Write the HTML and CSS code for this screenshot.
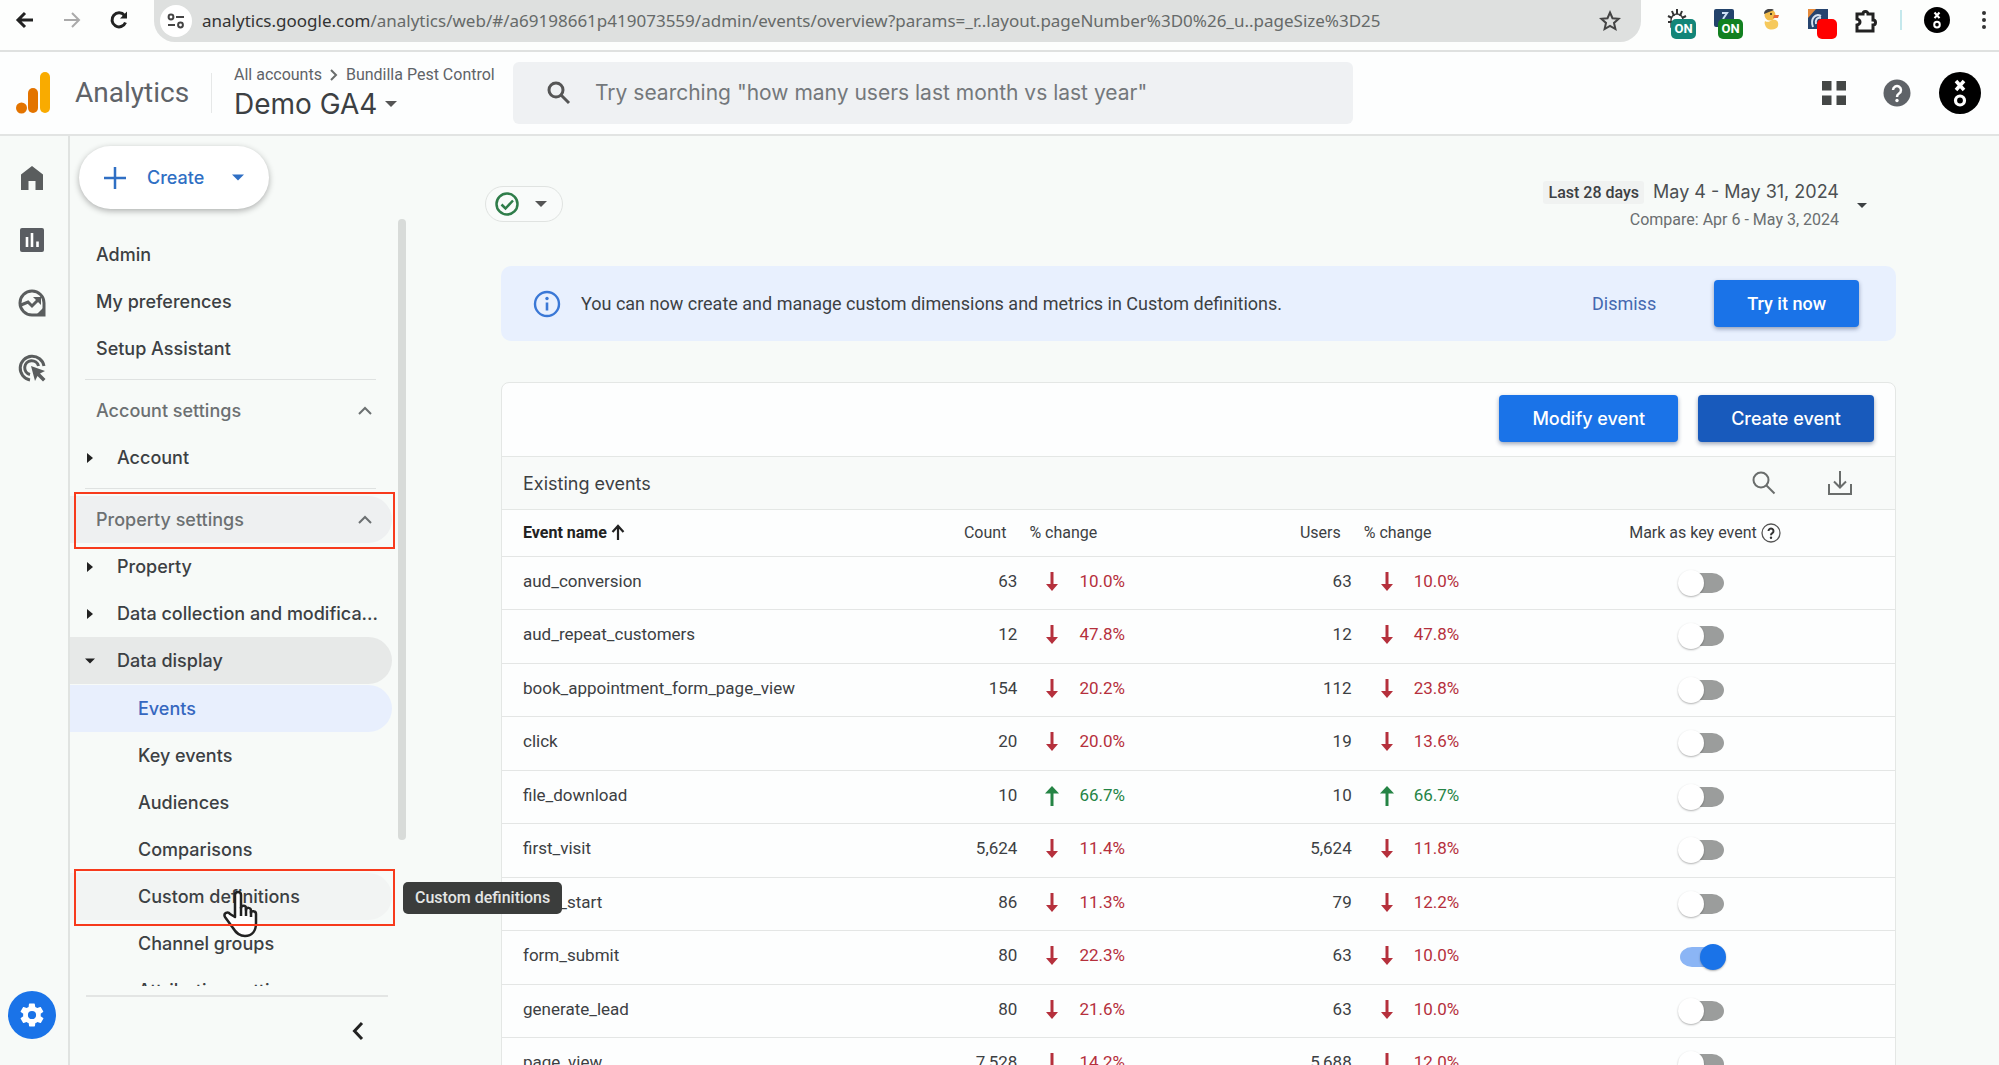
FILE: index.html
```html
<!DOCTYPE html>
<html lang="en">
<head>
<meta charset="utf-8">
<title>Analytics | Events</title>
<link rel="stylesheet" href="styles.css">
</head>
<body>
<svg class="defs" aria-hidden="true">
  <symbol id="i-down" viewBox="0 0 14 24"><path d="M7 3v16" stroke="currentColor" stroke-width="3" fill="none"/><path d="M1 15h12l-6 7z" fill="currentColor"/></symbol>
  <symbol id="i-up" viewBox="0 0 14 24"><path d="M7 7v16" stroke="currentColor" stroke-width="3" fill="none"/><path d="M0 10.500h14L7 3z" fill="currentColor"/></symbol>
  <symbol id="i-caret" viewBox="0 0 12 6"><path d="M0 0h12L6 6z" fill="currentColor"/></symbol>
  <symbol id="i-right" viewBox="0 0 6 10"><path d="M0 0l6 5-6 5z" fill="currentColor"/></symbol>
  <symbol id="i-fold" viewBox="0 0 14 9"><path d="M1 8l6-6 6 6" fill="none" stroke="currentColor" stroke-width="2"/></symbol>
  <symbol id="i-xo" viewBox="0 0 42 42"><circle cx="21" cy="21" r="21" fill="#000"/><path d="M17 9l8 9M25 9l-8 9" stroke="#fff" stroke-width="3.500"/><circle cx="21" cy="28.500" r="4.500" fill="none" stroke="#fff" stroke-width="3.200"/></symbol>
</svg>

<div class="browser">
  <button class="plain" aria-label="Back"><svg width="20" height="20" viewBox="0 0 20 20"><path d="M18 10H4M10 3l-7 7 7 7" class="ln dark"/></svg></button>
  <button class="plain" aria-label="Forward"><svg width="20" height="20" viewBox="0 0 20 20"><path d="M2 10h14M10 3l7 7-7 7" class="ln pale"/></svg></button>
  <button class="plain" aria-label="Reload"><svg width="20" height="20" viewBox="0 0 20 20"><path d="M16.500 12.500A7 7 0 1 1 15.500 5.500" class="ln dark"/><path d="M18 1.500v7h-7z" fill="#222"/></svg></button>
  <div class="omnibox">
    <span class="site"><svg width="18" height="18" viewBox="0 0 18 18"><circle cx="4" cy="5" r="2.400" class="ln ink"/><path d="M9 5h8M1 13h7" class="ln ink"/><circle cx="13.500" cy="13" r="2.400" class="ln ink"/></svg></span>
    <span class="url"><b>analytics.google.com</b>/analytics/web/#/a69198661p419073559/admin/events/overview?params=_r..layout.pageNumber%3D0%26_u..pageSize%3D25</span>
    <svg width="22" height="22" viewBox="0 0 22 22"><path d="M11 2.500l2.500 5.700 6.200.6-4.700 4.100 1.400 6.100L11 15.800 5.600 19 7 12.900 2.300 8.800l6.200-.6z" class="ln ink"/></svg>
  </div>
  <div class="exts">
    <div class="ext"><svg width="20" height="20" viewBox="0 0 20 20"><path d="M4 11a6 6 0 0 1 12 0v7H4z" fill="#fff" stroke="#444" stroke-width="1.500"/><path d="M1 7l4 2M5 2l2 5M10 0v5M15 2l-2 5M19 7l-4 2M1 13h4" stroke="#333" stroke-width="2"/></svg><span class="badge teal">ON</span></div>
    <div class="ext"><svg width="20" height="20" viewBox="0 0 20 20"><rect width="20" height="18" rx="2" fill="#23436b"/><path d="M8 4h5l-4 6" stroke="#cfe0f5" stroke-width="2" fill="none"/></svg><span class="badge green">ON</span></div>
    <div class="ext"><svg width="20" height="22" viewBox="0 0 20 22"><circle cx="9" cy="6" r="5.500" fill="#f2bd4b"/><path d="M3 5a6 5 0 0 1 10-4z" fill="#444"/><path d="M13 6h5l-1 3h-5z" fill="#e8693a"/><path d="M4 12c3 2 5 0 7-1 5-1 7 2 6 6-1 4-9 5-12 1-1-2-2-4-1-6z" fill="#f6c95c"/><circle cx="10" cy="5" r="1" fill="#222"/></svg></div>
    <div class="ext"><svg width="20" height="20" viewBox="0 0 20 20"><rect width="20" height="20" fill="#27456f"/><path d="M0 0h8L0 9z" fill="#e58a3c"/><path d="M5 18c-3-8 2-14 8-11M8 15c-1-4 1-7 5-6" stroke="#d8e4f2" stroke-width="2" fill="none"/></svg><span class="badge red"></span></div>
    <div class="ext"><svg width="22" height="24" viewBox="0 0 22 24"><path d="M2 5h6a2.500 2.500 0 1 1 5 0h5v6a2.500 2.500 0 1 1 0 5v6H2v-6c4-1 4-5 0-6z" class="ln dark"/></svg></div>
  </div>
  <span class="split"></span>
  <svg class="me" width="26" height="26"><use href="#i-xo"/></svg>
  <svg width="6" height="20" viewBox="0 0 6 20" fill="#333"><circle cx="3" cy="3" r="2"/><circle cx="3" cy="10" r="2"/><circle cx="3" cy="17" r="2"/></svg>
</div>

<header class="top">
  <svg class="logo" width="34" height="42" viewBox="0 0 34 42"><circle cx="5.500" cy="36" r="5.500" fill="#e37400"/><rect x="12" y="16" width="10" height="25" rx="5" fill="#e37400"/><rect x="24" y="0" width="10" height="41" rx="5" fill="#f9ab00"/></svg>
  <span class="brand">Analytics</span>
  <div class="property">
    <div class="crumbs"><a href="#">All accounts</a><svg width="8" height="12" viewBox="0 0 8 12"><path d="M1 1l5 5-5 5" class="ln grey"/></svg><a href="#">Bundilla Pest Control</a></div>
    <button class="plain picker">Demo GA4<svg width="12" height="6"><use href="#i-caret"/></svg></button>
  </div>
  <label class="search"><svg width="24" height="24" viewBox="0 0 24 24"><circle cx="9" cy="9" r="7" fill="none" stroke="#555" stroke-width="3"/><path d="M14 14l8 8" stroke="#555" stroke-width="3"/></svg>
    <input type="text" aria-label="Search" placeholder='Try searching "how many users last month vs last year"'></label>
  <div class="tools">
    <button class="plain" aria-label="Apps"><svg width="24" height="24" viewBox="0 0 24 24" fill="#444746"><path d="M0 0h9.500v9.500H0zM14.500 0H24v9.500h-9.500zM0 14.500h9.500V24H0zM14.500 14.500H24V24h-9.500z"/></svg></button>
    <button class="plain" aria-label="Help"><svg width="28" height="28" viewBox="0 0 28 28"><circle cx="14" cy="14" r="13.500" fill="#5f6368"/><path d="M10 11a4 4 0 1 1 6 3.500c-1.500 1-2 1.500-2 3.500" fill="none" stroke="#fff" stroke-width="2.500"/><circle cx="14" cy="21.500" r="1.700" fill="#fff"/></svg></button>
    <button class="plain" aria-label="Account"><svg width="42" height="42"><use href="#i-xo"/></svg></button>
  </div>
</header>

<div class="app">
  <nav class="rail" aria-label="Sections">
    <a href="#" aria-label="Home"><svg width="24" height="26" viewBox="0 0 24 26"><path d="M1 9.500L12 1l11 8.500V25h-7.500v-9h-7v9H1z" fill="#5a5d5e"/></svg></a>
    <a href="#" aria-label="Reports"><svg width="24" height="24" viewBox="0 0 24 24"><rect width="24" height="24" rx="2" fill="#5a5d62"/><path d="M7 9v10M12 5v14M17.500 13.500v5.500" stroke="#fff" stroke-width="2.600"/></svg></a>
    <a href="#" aria-label="Explore"><svg width="28" height="28" viewBox="0 0 28 28"><path d="M14 2a12 12 0 1 0 0 24h12V14A12 12 0 0 0 14 2z" class="ln rl"/><path d="M3 16l7-3 4 4 7-7" class="ln rl"/><path d="M15 8h8v8z" fill="#5a5d5e"/><path d="M25 19v6h-6z" fill="#5a5d5e"/></svg></a>
    <a href="#" aria-label="Advertising"><svg width="28" height="28" viewBox="0 0 28 28"><path d="M12 26A12 12 0 1 1 26 12" class="ln rl"/><path d="M12 20.500A7 7 0 1 1 20.500 12" class="ln rl"/><path d="M13 12l14 5-5 2.500 5.500 5.500-2.500 2.500-5.500-5.500-2.500 5z" fill="#5a5d5e"/></svg></a>
    <a href="#" class="gear" aria-label="Admin"><svg width="28" height="28" viewBox="0 0 24 24"><path fill="#fff" d="M19.400 13c0-.3.100-.6.100-1s0-.7-.1-1l2.100-1.600c.2-.2.200-.4.100-.6l-2-3.500c-.1-.2-.4-.3-.6-.2l-2.500 1c-.5-.4-1.100-.7-1.700-1l-.4-2.600c0-.2-.2-.4-.5-.4h-4c-.2 0-.5.200-.5.400L9.100 5.100c-.6.300-1.200.6-1.700 1l-2.500-1c-.2-.1-.5 0-.6.200l-2 3.500c-.1.200-.1.500.1.600L4.500 11c0 .3-.1.600-.1 1s0 .7.100 1l-2.100 1.600c-.2.200-.2.400-.1.600l2 3.500c.1.200.4.300.6.200l2.500-1c.5.400 1.100.7 1.700 1l.4 2.600c0 .2.200.4.500.4h4c.2 0 .5-.2.500-.4l.4-2.600c.6-.3 1.200-.6 1.700-1l2.500 1c.2.100.5 0 .6-.2l2-3.500c.1-.2.100-.5-.1-.6zM12 15.500a3.500 3.500 0 1 1 0-7 3.500 3.500 0 0 1 0 7z"/></svg></a>
  </nav>

  <aside class="side">
    <button class="create"><svg width="22" height="22" viewBox="0 0 22 22"><path d="M11 0v22M0 11h22" stroke="currentColor" stroke-width="2.500"/></svg><span>Create</span><svg width="12" height="7"><use href="#i-caret"/></svg></button>
    <div class="scroller">
      <ul class="menu">
        <li><a href="#">Admin</a></li>
        <li><a href="#">My preferences</a></li>
        <li><a href="#">Setup Assistant</a></li>
        <li class="rule"></li>
        <li><button class="group">Account settings<svg width="14" height="9"><use href="#i-fold"/></svg></button></li>
        <li><a href="#" class="node"><svg class="tw" width="6" height="10"><use href="#i-right"/></svg>Account</a></li>
        <li class="rule"></li>
        <li class="marked"><button class="group hover">Property settings<svg width="14" height="9"><use href="#i-fold"/></svg></button></li>
        <li><a href="#" class="node"><svg class="tw" width="6" height="10"><use href="#i-right"/></svg>Property</a></li>
        <li><a href="#" class="node"><svg class="tw" width="6" height="10"><use href="#i-right"/></svg>Data collection and modifica...</a></li>
        <li><a href="#" class="node open"><svg class="tw" width="10" height="6"><use href="#i-caret"/></svg>Data display</a>
          <ul class="sub">
            <li><a href="#" class="current">Events</a></li>
            <li><a href="#">Key events</a></li>
            <li><a href="#">Audiences</a></li>
            <li><a href="#">Comparisons</a></li>
            <li class="marked"><a href="#" class="soft">Custom definitions</a>
              <svg class="hand" width="38" height="48" viewBox="0 0 38 48"><path d="M13 27V5c0-4 6-4 6 0v13c0-3 5-3 5 0v2c0-3 5-3 5 1v2c0-3 5-2 5 1v9c0 8-4 13-11 13-6 0-9-3-12-8L3 27c-2-4 3-6 5-3z" fill="#fff" stroke="#222" stroke-width="2.500" stroke-linejoin="round"/><path d="M19 17v9M24 18v8M29 21v6" stroke="#222" stroke-width="2.500"/></svg>
              <span class="tip" role="tooltip">Custom definitions</span></li>
            <li><a href="#">Channel groups</a></li>
            <li><a href="#">Attribution settings</a></li>
          </ul></li>
      </ul>
      <div class="thumb"></div>
    </div>
    <div class="foot"><button class="plain" aria-label="Collapse"><svg width="12" height="20" viewBox="0 0 12 20"><path d="M10 2l-7.500 8 7.500 8" fill="none" stroke="#222" stroke-width="3"/></svg></button></div>
  </aside>

  <main class="main">
    <div class="bar">
      <button class="chip" aria-label="Data quality"><svg width="24" height="24" viewBox="0 0 24 24"><circle cx="12" cy="12" r="10.500" fill="none" stroke="#2f7d4a" stroke-width="2.500"/><path d="M6.500 12.500l4 4 7.500-8" fill="none" stroke="#2f7d4a" stroke-width="2.500"/></svg><svg width="12" height="6"><use href="#i-caret"/></svg></button>
      <button class="plain dates"><span class="range"><span><span class="preset">Last 28 days</span><span class="when">May 4 - May 31, 2024</span></span><span class="compare">Compare: Apr 6 - May 3, 2024</span></span><svg width="10" height="5"><use href="#i-caret"/></svg></button>
    </div>

    <section class="banner">
      <svg width="28" height="28" viewBox="0 0 28 28"><circle cx="14" cy="14" r="12" fill="none" stroke="#3a78d6" stroke-width="2.400"/><path d="M14 12.500v8" stroke="#3a78d6" stroke-width="2.600"/><circle cx="14" cy="8.500" r="1.700" fill="#3a78d6"/></svg>
      <p>You can now create and manage custom dimensions and metrics in Custom definitions.</p>
      <button class="plain dismiss">Dismiss</button>
      <button class="btn">Try it now</button>
    </section>

    <section class="card">
      <div class="actions"><button class="btn wide">Modify event</button><button class="btn wide deep">Create event</button></div>
      <div class="caption"><h2>Existing events</h2>
        <button class="plain" aria-label="Search events"><svg width="24" height="24" viewBox="0 0 24 24"><circle cx="9" cy="9" r="7.500" class="ln grey"/><path d="M14.500 14.500l8 8" class="ln grey"/></svg></button>
        <button class="plain" aria-label="Download"><svg width="26" height="26" viewBox="0 0 26 26"><path d="M13 1v16M7 11.500l6 6 6-6M2 14v10h22V14" class="ln grey"/></svg></button></div>
      <table>
        <colgroup><col class="c-name"><col class="c-num"><col class="c-chg"><col class="c-num"><col class="c-chg2"><col class="c-key"></colgroup>
        <thead><tr><th class="name" scope="col">Event name <svg width="14" height="16" viewBox="0 0 14 16"><path d="M7 16V2M1.500 8L7 2l5.500 6" fill="none" stroke="#222" stroke-width="2.200"/></svg></th><th class="num" scope="col">Count</th><th class="chg" scope="col">% change</th><th class="num" scope="col">Users</th><th class="chg" scope="col">% change</th><th class="key" scope="col">Mark as key event <svg width="20" height="20" viewBox="0 0 20 20"><circle cx="10" cy="10" r="9" fill="none" stroke="#555" stroke-width="1.300"/><path d="M7.500 8a2.500 2.500 0 1 1 3.800 2.200c-1 .6-1.300 1-1.300 2" fill="none" stroke="#333" stroke-width="2"/><circle cx="10" cy="14.700" r="1.200" fill="#333"/></svg></th></tr></thead>
        <tbody>
          <tr><td class="name">aud_conversion</td><td class="num">63</td><td class="chg"><span class="dn"><svg><use href="#i-down"/></svg>10.0%</span></td><td class="num">63</td><td class="chg"><span class="dn"><svg><use href="#i-down"/></svg>10.0%</span></td><td class="key"><input type="checkbox" aria-label="aud_conversion key event"></td></tr>
          <tr><td class="name">aud_repeat_customers</td><td class="num">12</td><td class="chg"><span class="dn"><svg><use href="#i-down"/></svg>47.8%</span></td><td class="num">12</td><td class="chg"><span class="dn"><svg><use href="#i-down"/></svg>47.8%</span></td><td class="key"><input type="checkbox" aria-label="aud_repeat_customers key event"></td></tr>
          <tr><td class="name">book_appointment_form_page_view</td><td class="num">154</td><td class="chg"><span class="dn"><svg><use href="#i-down"/></svg>20.2%</span></td><td class="num">112</td><td class="chg"><span class="dn"><svg><use href="#i-down"/></svg>23.8%</span></td><td class="key"><input type="checkbox" aria-label="book_appointment_form_page_view key event"></td></tr>
          <tr><td class="name">click</td><td class="num">20</td><td class="chg"><span class="dn"><svg><use href="#i-down"/></svg>20.0%</span></td><td class="num">19</td><td class="chg"><span class="dn"><svg><use href="#i-down"/></svg>13.6%</span></td><td class="key"><input type="checkbox" aria-label="click key event"></td></tr>
          <tr><td class="name">file_download</td><td class="num">10</td><td class="chg"><span class="up"><svg><use href="#i-up"/></svg>66.7%</span></td><td class="num">10</td><td class="chg"><span class="up"><svg><use href="#i-up"/></svg>66.7%</span></td><td class="key"><input type="checkbox" aria-label="file_download key event"></td></tr>
          <tr><td class="name">first_visit</td><td class="num">5,624</td><td class="chg"><span class="dn"><svg><use href="#i-down"/></svg>11.4%</span></td><td class="num">5,624</td><td class="chg"><span class="dn"><svg><use href="#i-down"/></svg>11.8%</span></td><td class="key"><input type="checkbox" aria-label="first_visit key event"></td></tr>
          <tr><td class="name">form_start</td><td class="num">86</td><td class="chg"><span class="dn"><svg><use href="#i-down"/></svg>11.3%</span></td><td class="num">79</td><td class="chg"><span class="dn"><svg><use href="#i-down"/></svg>12.2%</span></td><td class="key"><input type="checkbox" aria-label="form_start key event"></td></tr>
          <tr><td class="name">form_submit</td><td class="num">80</td><td class="chg"><span class="dn"><svg><use href="#i-down"/></svg>22.3%</span></td><td class="num">63</td><td class="chg"><span class="dn"><svg><use href="#i-down"/></svg>10.0%</span></td><td class="key"><input type="checkbox" checked aria-label="form_submit key event"></td></tr>
          <tr><td class="name">generate_lead</td><td class="num">80</td><td class="chg"><span class="dn"><svg><use href="#i-down"/></svg>21.6%</span></td><td class="num">63</td><td class="chg"><span class="dn"><svg><use href="#i-down"/></svg>10.0%</span></td><td class="key"><input type="checkbox" aria-label="generate_lead key event"></td></tr>
          <tr><td class="name">page_view</td><td class="num">7,528</td><td class="chg"><span class="dn"><svg><use href="#i-down"/></svg>14.2%</span></td><td class="num">5,688</td><td class="chg"><span class="dn"><svg><use href="#i-down"/></svg>12.0%</span></td><td class="key"><input type="checkbox" aria-label="page_view key event"></td></tr>
        </tbody>
      </table>
    </section>
  </main>
</div>
</body>
</html>
```
FILE: styles.css
```css
* { box-sizing: border-box; }
body {
  margin: 0;
  height: 100vh;
  display: flex;
  flex-direction: column;
  overflow: hidden;
  background: #f7faf8;
  color: #3c4043;
  font-family: Roboto, "Liberation Sans", sans-serif;
  font-size: 16px;
}
.defs { display: none; }
button, input { font: inherit; color: inherit; }
button { cursor: pointer; }
svg { flex: none; display: block; }
a { color: inherit; text-decoration: none; }
.plain { border: 0; background: none; padding: 0; display: block; }
.ln { fill: none; stroke-width: 2; }
.dark { stroke: #222; stroke-width: 3; }
.pale { stroke: #aaa; }
.ink { stroke: #444; }
.grey { stroke: #6a6d6c; }
.rl { stroke: #5a5d5e; stroke-width: 3; }

/* browser chrome */
.browser {
  flex: none;
  height: 52px;
  display: flex;
  align-items: flex-start;
  padding: 0 12px 0 15px;
  background: #fdfefd;
  border-bottom: 2px solid #dfe1e0;
}
.browser > .plain { margin: 10px 27px 0 0; }
.omnibox {
  flex: 1;
  height: 42px;
  display: flex;
  align-items: center;
  margin-left: -2px;
  padding: 0 20px 0 6px;
  background: #dee0df;
  border-radius: 0 0 21px 21px;
}
.site {
  width: 32px;
  height: 32px;
  margin-right: 10px;
  border-radius: 50%;
  background: #fff;
  display: grid;
  place-items: center;
}
.url {
  flex: 1;
  color: #666a69;
  font: 17px/24px "Noto Sans", "Open Sans", sans-serif;
  white-space: nowrap;
}
.url b { font-weight: 400; color: #333; }
.exts { display: flex; gap: 27px; margin: 9px 0 0 26px; }
.ext { position: relative; width: 20px; }
.badge {
  position: absolute;
  left: 4px;
  top: 10px;
  width: 25px;
  height: 20px;
  border-radius: 5px;
  color: #fff;
  font: bold 13px/20px Roboto, sans-serif;
  text-align: center;
}
.teal { background: #138578; }
.green { background: #128020; }
.red { background: #f00; width: 20px; left: 9px; }
.split { width: 2px; height: 20px; margin: 10px 22px 0 25px; background: #c4e8ec; }
.me { margin: 7px 31px 0 0; }
.browser > svg:last-child { margin-top: 10px; }

/* product header */
.top {
  flex: none;
  height: 84px;
  display: flex;
  align-items: center;
  padding: 0 18px 0 16px;
  background: #fdfefe;
  border-bottom: 2px solid #e2e4e3;
}
.brand {
  width: 137px;
  margin: 0 22px 0 25px;
  border-right: 1px solid #e6e8e8;
  color: #5f6368;
  font-size: 28px;
  line-height: 40px;
}
.property { width: 279px; }
.crumbs { display: flex; align-items: center; gap: 8px; color: #5f6368; font-size: 16px; line-height: 22px; white-space: nowrap; }
.picker { display: flex; align-items: center; gap: 8px; font: 28px/36px Inter, Roboto, sans-serif; }
.picker svg { color: #555; }
.search {
  flex: 0 1 840px;
  height: 62px;
  display: flex;
  align-items: center;
  gap: 24px;
  padding: 0 34px;
  background: #eff1f3;
  border-radius: 6px;
}
.search input { flex: 1; border: 0; padding: 0; outline: 0; background: none; font: 21px/28px Inter, Roboto, sans-serif; }
.search input::placeholder { color: #74787b; opacity: 1; }
.tools { margin-left: auto; display: flex; align-items: center; gap: 37px; }
.tools button:last-child { margin-left: -9px; }

.app { flex: 1; min-height: 0; display: flex; }
.rail {
  flex: none;
  width: 70px;
  display: flex;
  flex-direction: column;
  align-items: center;
  gap: 37px;
  padding: 29px 4px 26px 0;
  border-right: 2px solid #e0e3e1;
}
.gear {
  width: 48px;
  height: 48px;
  margin-top: auto;
  border-radius: 50%;
  background: #1a73e8;
  display: grid;
  place-items: center;
}

/* admin menu */
.side { flex: none; width: 336px; display: flex; flex-direction: column; font-family: Inter, Roboto, sans-serif; font-size: 18px; font-weight: 500; z-index: 1; }
.create {
  flex: none;
  width: 190px;
  height: 63px;
  display: flex;
  align-items: center;
  margin: 10px 0 10px 9px;
  padding: 0 25px;
  border: 0;
  border-radius: 32px;
  background: #fff;
  box-shadow: 0 2px 6px rgba(0, 0, 0, .3);
  color: #2f6fc4;
}
.create span { flex: 1; padding-left: 21px; text-align: left; }
.scroller { flex: 1; min-height: 0; display: flex; gap: 6px; }
.menu {
  width: 322px;
  margin: 0;
  padding: 12px 0 0;
  list-style: none;
  overflow-x: visible;
  overflow-y: clip;
}
.menu a, .group {
  width: 100%;
  height: 47px;
  display: flex;
  align-items: center;
  padding: 0 20px 0 26px;
  border: 0;
  border-radius: 0 24px 24px 0;
  background: none;
  white-space: nowrap;
}
.group { justify-content: space-between; color: #6c7072; }
.group.hover { background: #eef0f1; }
.rule { height: 1px; margin: 7px 16px 7px 15px; background: #dfe2e1; }
.menu .node { padding: 0 0 0 15px; }
.tw { width: 10px; margin-right: 22px; color: #222; }
.menu .open { background: #e7e9e8; }
.sub { margin: 0; padding: 1px 0 0; list-style: none; }
.menu .sub a { padding-left: 68px; }
.menu .current { background: #e8effd; color: #3567c0; }
.menu .soft { background: #f2f4f3; }
.marked { position: relative; }
.marked::after { content: ""; position: absolute; inset: -4px -3px -6px 4px; border: 2px solid #f73a1c; pointer-events: none; }
.hand { position: absolute; left: 152px; top: 17px; }
.tip {
  position: absolute;
  left: 333px;
  top: 9px;
  padding: 0 12px;
  border-radius: 5px;
  background: #3b3d3c;
  color: #e4e6e5;
  font: 500 16px/32px Roboto, sans-serif;
  white-space: nowrap;
}
.thumb { width: 8px; height: 81%; border-radius: 4px; background: #d8dbd9; }
.foot { flex: none; display: flex; justify-content: flex-end; margin: 9px 18px 0 16px; padding: 24px 24px 24px 0; border-top: 2px solid #e3e5e4; }

/* report */
.main { flex: 1; min-width: 0; padding: 0 103px 0 95px; }
.bar { display: flex; justify-content: space-between; margin: 42px 29px 0 -16px; height: 88px; }
.chip {
  width: 78px;
  height: 36px;
  display: flex;
  align-items: center;
  justify-content: space-between;
  margin-top: 8px;
  padding: 0 15px 0 9px;
  border: 1px solid #e0e3e1;
  border-radius: 18px;
  background: #f9fbfa;
  color: #555;
}
.dates { display: flex; align-items: center; gap: 18px; height: 54px; }
.range { display: flex; flex-direction: column; align-items: flex-end; line-height: 27px; }
.preset { padding: 2px 5px; margin-right: 9px; border-radius: 3px; background: #f0f2f1; font-size: 16px; font-weight: 500; }
.when { font-family: Inter, Roboto, sans-serif; font-size: 18px; color: #4c5053; }
.compare { font-size: 16px; color: #6a6e70; }
.banner {
  display: flex;
  align-items: center;
  height: 75px;
  padding: 0 37px 0 32px;
  border-radius: 10px;
  background: #e8f0fe;
}
.banner p { flex: 1; margin: 0; padding-left: 20px; font-size: 18px; }
.dismiss { margin-right: 58px; color: #4468b0; font-size: 18px; }
.btn {
  height: 47px;
  padding: 0 33px;
  border: 0;
  border-radius: 4px;
  background: #1a73e8;
  box-shadow: 0 2px 4px rgba(40, 60, 100, .45);
  color: #fff;
  font-size: 18px;
  font-weight: 500;
}
.btn.wide { font-family: Inter, Roboto, sans-serif; }
.btn.deep { background: #185abc; }
.card { margin-top: 41px; border: 1px solid #e4e7e5; border-radius: 8px 8px 0 0; background: #fdfefe; }
.actions { display: flex; justify-content: flex-end; gap: 20px; height: 73px; padding: 12px 21px; }
.caption { display: flex; align-items: center; gap: 51px; height: 54px; padding: 0 42px 0 21px; border: 1px solid #e4e7e5; border-width: 1px 0; background: #f8faf9; }
.caption h2 { flex: 1; margin: 0; font-family: Inter, Roboto, sans-serif; font-size: 18px; font-weight: 400; }
table { width: 100%; border-collapse: collapse; table-layout: fixed; }
.c-name { width: 28%; }
.c-num { width: 9%; }
.c-chg { width: 15%; }
.c-chg2 { width: 12%; }
.c-key { width: 27%; }
th, td { border-bottom: 1px solid #e4e6e5; text-align: left; white-space: nowrap; }
th { height: 46px; padding: 0; font-size: 16px; font-weight: 400; }
th svg { display: inline-block; vertical-align: -2px; }
.key svg { vertical-align: -5px; }
td { height: 54px; padding: 0 0 4px; font-size: 17px; }
tr:nth-child(odd) td { height: 53px; }
.name { padding-left: 21px; }
th.name { font-weight: 700; color: #222; }
.num { text-align: right; }
th.num { padding-right: 11px; }
th.chg { padding-left: 12px; }
.chg span { display: flex; align-items: center; gap: 20px; padding-left: 28px; }
.chg svg { width: 14px; height: 24px; }
.dn { color: #b5303c; }
.up { color: #258445; }
.key { text-align: center; }
th.key { padding-right: 4px; }
td.key { padding: 0 10px 0 0; }
input[type="checkbox"] {
  appearance: none;
  width: 46px;
  height: 26px;
  margin: 0;
  display: inline-block;
  vertical-align: middle;
  border-radius: 13px;
  border: solid transparent;
  border-width: 3px 1px;
  background: #9b9d9c padding-box;
}
input[type="checkbox"]::before {
  content: "";
  display: block;
  width: 26px;
  height: 26px;
  margin: -3px 0 0 -2px;
  border-radius: 50%;
  background: #fff;
  box-shadow: 0 1px 2px rgba(0, 0, 0, .3);
}
input[type="checkbox"]:checked { background-color: #8bb5f5; }
input[type="checkbox"]:checked::before { margin-left: 20px; background: #1a73e8; }
```
